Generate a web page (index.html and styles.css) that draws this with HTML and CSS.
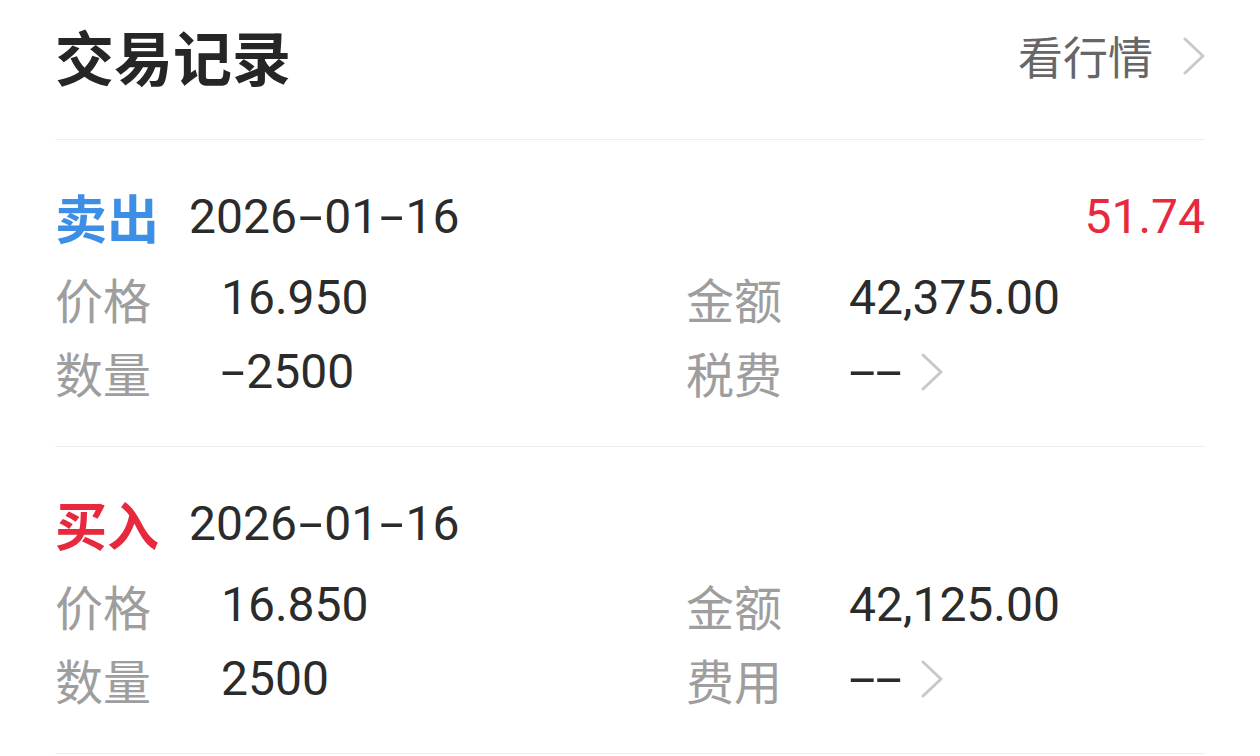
FILE: index.html
```html
<!DOCTYPE html>
<html lang="zh-CN">
<head>
    <meta charset="UTF-8">
    <meta name="viewport" content="width=device-width, initial-scale=1.0">
    <title>交易记录</title>
    <link rel="stylesheet" href="styles.css">
</head>
<body>
    <div class="container">
        <div class="header">
            <h1 class="title">交易记录</h1>
            <a class="market-link" href="#">
                <span>看行情</span>
                <svg class="chevron" width="22" height="38" viewBox="0 0 22 38" fill="none" stroke="currentColor" stroke-width="3" stroke-linecap="round" stroke-linejoin="round">
                    <polyline points="2,2 20,19 2,36"></polyline>
                </svg>
            </a>
        </div>

        <div class="trade">
            <div class="trade-head">
                <span class="trade-type sell">卖出</span>
                <span class="trade-date">2026<span class="sep">-</span>01<span class="sep">-</span>16</span>
                <span class="trade-profit">51.74</span>
            </div>
            <div class="trade-grid">
                <span class="label">价格</span>
                <span class="value">16.950</span>
                <span class="label">金额</span>
                <span class="value">42,375.00</span>
                <span class="label">数量</span>
                <span class="value"><span class="sep">-</span>2500</span>
                <span class="label">税费</span>
                <span class="value fee">
                    <span class="dashes">--</span>
                    <svg class="chevron" width="22" height="38" viewBox="0 0 22 38" fill="none" stroke="currentColor" stroke-width="3" stroke-linecap="round" stroke-linejoin="round">
                        <polyline points="2,2 20,19 2,36"></polyline>
                    </svg>
                </span>
            </div>
        </div>

        <div class="trade">
            <div class="trade-head">
                <span class="trade-type buy">买入</span>
                <span class="trade-date">2026<span class="sep">-</span>01<span class="sep">-</span>16</span>
            </div>
            <div class="trade-grid">
                <span class="label">价格</span>
                <span class="value">16.850</span>
                <span class="label">金额</span>
                <span class="value">42,125.00</span>
                <span class="label">数量</span>
                <span class="value">2500</span>
                <span class="label">费用</span>
                <span class="value fee">
                    <span class="dashes">--</span>
                    <svg class="chevron" width="22" height="38" viewBox="0 0 22 38" fill="none" stroke="currentColor" stroke-width="3" stroke-linecap="round" stroke-linejoin="round">
                        <polyline points="2,2 20,19 2,36"></polyline>
                    </svg>
                </span>
            </div>
        </div>
    </div>
</body>
</html>
```

FILE: styles.css
```css
* {
    margin: 0;
    padding: 0;
    box-sizing: border-box;
}

body {
    background-color: #ffffff;
    color: #2b2b2b;
    font-family: Roboto, "Noto Sans CJK SC", sans-serif;
}

.container {
    width: 100%;
    padding: 0 55px;
}

.header {
    height: 140px;
    padding-bottom: 28px;
    display: flex;
    align-items: center;
    justify-content: space-between;
    border-bottom: 1px solid #eeeeee;
}

.title {
    font-family: "Noto Sans CJK SC", sans-serif;
    font-size: 59px;
    font-weight: 700;
    line-height: 1;
    color: #262626;
}

.market-link {
    display: flex;
    align-items: center;
    gap: 30px;
    font-family: "Noto Sans CJK SC", sans-serif;
    font-size: 45px;
    line-height: 1;
    color: #666666;
    text-decoration: none;
}

.chevron {
    display: block;
    color: #c8c8c8;
}

.trade {
    padding: 40px 0 37px;
    border-bottom: 1px solid #eeeeee;
}

.trade-head {
    height: 74px;
    display: flex;
    align-items: center;
}

.trade-type {
    font-family: "Noto Sans CJK SC", sans-serif;
    font-size: 52px;
    font-weight: 700;
    line-height: 1;
}

.trade-type.sell {
    color: #3d8fe6;
}

.trade-type.buy {
    color: #e8283c;
}

.trade-date {
    margin-left: 30px;
    font-size: 48px;
    line-height: 1;
}

.sep {
    display: inline-block;
    margin: 0 7px;
    transform: scaleX(1.8);
}

.trade-profit {
    margin-left: auto;
    font-size: 48px;
    line-height: 1;
    color: #e8283c;
}

.trade-grid {
    margin-top: 7px;
    display: grid;
    grid-template-columns: 166px 465px 163px 1fr;
    grid-auto-rows: 74px;
    align-items: center;
}

.label {
    font-family: "Noto Sans CJK SC", sans-serif;
    font-size: 48px;
    line-height: 1;
    color: #9e9e9e;
}

.value {
    font-size: 48px;
    line-height: 1;
    color: #2b2b2b;
}

.value .sep {
    margin: 0 12px 0 0;
    transform-origin: left center;
}

.value.fee {
    display: flex;
    align-items: center;
}

.dashes {
    display: inline-block;
    margin-right: 45px;
    transform: scaleX(2);
    transform-origin: left center;
}
```
